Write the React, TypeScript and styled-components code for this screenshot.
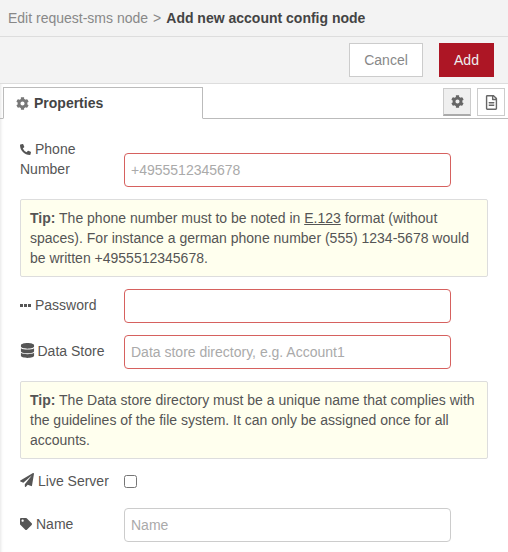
import styled, { createGlobalStyle } from 'styled-components';
import { FaCog, FaDatabase, FaPaperPlane, FaPhoneAlt, FaTag, FaRegFileAlt } from 'react-icons/fa';

const GlobalStyle = createGlobalStyle`
  html, body { margin: 0; padding: 0; background: #fff; }
  * { box-sizing: border-box; }
  body {
    font-family: "Liberation Sans", Arial, sans-serif;
    font-size: 14px;
    color: #555;
    overflow: hidden;
  }
`;

const Tray = styled.div`
  width: 508px;
  height: 552px;
  overflow: hidden;
  background: #fff;
  box-shadow: inset 3px 0 3px -2px rgba(0,0,0,0.1);
`;

const Header = styled.div`
  height: 37px;
  background: #f3f3f3;
  border-bottom: 1px solid #ddd;
  padding: 9px 8px 0;
  line-height: 18px;
  color: #888;
  white-space: nowrap;
  b { color: #444; }
`;

const Separator = styled.span`
  margin: 0 5px;
`;

const Toolbar = styled.div`
  height: 47px;
  background: #f3f3f3;
  border-bottom: 1px solid #ddd;
  display: flex;
  justify-content: flex-end;
  gap: 16px;
  padding: 6px 14px 0 0;
`;

const Button = styled.button<{ $primary?: boolean }>`
  height: 34px;
  width: ${p => (p.$primary ? '55px' : '74px')};
  font: inherit;
  padding: 0;
  border: 1px solid ${p => (p.$primary ? '#AD1625' : '#ccc')};
  background: ${p => (p.$primary ? '#AD1625' : '#fff')};
  color: ${p => (p.$primary ? '#eee' : '#888')};
`;

const TabBar = styled.div`
  height: 35px;
  border-bottom: 1px solid #bbb;
  display: flex;
  justify-content: space-between;
  padding: 3px 3px 0;
`;

const Tab = styled.div`
  width: 200px;
  height: 32px;
  border: 1px solid #bbb;
  border-bottom: 1px solid #fff;
  background: #fff;
  padding: 0 0 0 12px;
  display: flex;
  align-items: center;
  gap: 5px;
  font-weight: bold;
  color: #444;
  svg { color: #777; }
`;

const TabButtons = styled.div`
  display: flex;
  gap: 6px;
  padding-top: 1px;
`;

const TabButton = styled.div<{ $selected?: boolean }>`
  width: 28px;
  height: 28px;
  display: flex;
  align-items: center;
  justify-content: center;
  background: ${p => (p.$selected ? '#efefef' : '#fff')};
  border: 1px solid #ccc;
  border-bottom: ${p => (p.$selected ? '2px solid #aaa' : '1px solid #ccc')};
  color: #666;
`;

const Form = styled.div`
  padding: 20px 20px 0;
  display: flex;
  flex-direction: column;
`;

const Row = styled.div<{ $top?: number; $tall?: boolean }>`
  display: flex;
  align-items: ${p => (p.$tall ? 'flex-end' : 'center')};
  height: ${p => (p.$tall ? '48px' : 'auto')};
  margin-top: ${p => p.$top ?? 0}px;
`;

const Label = styled.label<{ $tall?: boolean; $lift?: boolean }>`
  width: 104px;
  line-height: 20px;
  flex-shrink: 0;
  align-self: ${p => (p.$tall ? 'flex-start' : 'auto')};
  margin-bottom: ${p => (p.$lift ? '2px' : '0')};
  svg { vertical-align: -1px; margin-right: 4px; color: #555; }
`;

const StoreIcon = styled(FaDatabase)`
  &&& { vertical-align: -2px; margin-right: 2.5px; }
`;

const Field = styled.input<{ $invalid?: boolean }>`
  width: 327px;
  height: 34px;
  font: inherit;
  padding: 0 6px;
  background: #fff;
  color: #555;
  border-radius: 4px;
  border: 1px solid ${p => (p.$invalid ? '#d6615f' : '#ccc')};
  &::placeholder { color: #aaa; opacity: 1; }
`;

const Tip = styled.div`
  width: 468px;
  margin-top: 12px;
  padding: 8px 9px;
  line-height: 20px;
  background: #ffe;
  border: 1px solid #ddd;
  border-radius: 2px;
  u { text-decoration: underline; }
`;

const Check = styled.span`
  width: 13px;
  height: 13px;
  border: 1px solid #767676;
  border-radius: 2.5px;
  background: #fff;
`;

const Dots = () => (
  <svg width="11" height="11" viewBox="0 0 11 11" fill="currentColor">
    <rect x="0" y="4" width="3" height="3" />
    <rect x="4" y="4" width="3" height="3" />
    <rect x="8" y="4" width="3" height="3" />
  </svg>
);

export default function App() {
  return (
    <Tray>
      <GlobalStyle />
      <Header>
        Edit request-sms node<Separator>&gt;</Separator><b>Add new account config node</b>
      </Header>
      <Toolbar>
        <Button>Cancel</Button>
        <Button $primary>Add</Button>
      </Toolbar>
      <TabBar>
        <Tab><FaCog size={13} />Properties</Tab>
        <TabButtons>
          <TabButton $selected><FaCog size={13} /></TabButton>
          <TabButton><FaRegFileAlt size={15} /></TabButton>
        </TabButtons>
      </TabBar>
      <Form>
        <Row $tall>
          <Label $tall><FaPhoneAlt size={11} />Phone Number</Label>
          <Field $invalid placeholder="+4955512345678" />
        </Row>
        <Tip>
          <b>Tip:</b> The phone number must to be noted in <u>E.123</u> format (without spaces). For instance a german phone number (555) 1234-5678 would be written +4955512345678.
        </Tip>
        <Row $top={12}>
          <Label $lift><Dots />Password</Label>
          <Field $invalid />
        </Row>
        <Row $top={12}>
          <Label $lift><StoreIcon size={15} />Data Store</Label>
          <Field $invalid placeholder="Data store directory, e.g. Account1" />
        </Row>
        <Tip>
          <b>Tip:</b> The Data store directory must be a unique name that complies with the guidelines of the file system. It can only be assigned once for all accounts.
        </Tip>
        <Row $top={12}>
          <Label><FaPaperPlane size={14} />Live Server</Label>
          <Check />
        </Row>
        <Row $top={17}>
          <Label $lift><FaTag size={12} />Name</Label>
          <Field placeholder="Name" />
        </Row>
      </Form>
    </Tray>
  );
}
